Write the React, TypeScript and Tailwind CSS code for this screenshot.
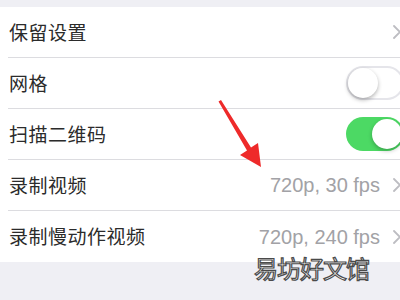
import React from "react";

const font = "font-['Noto_Sans_CJK_SC','Noto_Sans',sans-serif]";

function Chevron() {
  return (
    <svg width="10" height="16" viewBox="0 0 10 16" className="shrink-0">
      <path d="M2 2 L8 8 L2 14" fill="none" stroke="#bdbdc2" strokeWidth="1.8" strokeLinecap="round" strokeLinejoin="round" />
    </svg>
  );
}

function Toggle({ on }: { on: boolean }) {
  return (
    <div
      className={
        on
          ? "relative w-[58px] h-[34px] rounded-full bg-[#4cd964] shrink-0"
          : "relative w-[58px] h-[34px] rounded-full bg-white border-2 border-[#e5e5ea] shrink-0"
      }
    >
      <div
        className={
          on
            ? "absolute top-[2px] right-[2px] w-[30px] h-[30px] rounded-full bg-white shadow-[0_2px_4px_rgba(0,0,0,0.25)]"
            : "absolute top-0 left-0 w-[30px] h-[30px] rounded-full bg-white shadow-[0_2px_4px_rgba(0,0,0,0.3)]"
        }
      />
    </div>
  );
}

function Row({
  label,
  value,
  chevron,
  toggle,
  last,
}: {
  label: string;
  value?: string;
  chevron?: boolean;
  toggle?: "on" | "off";
  last?: boolean;
}) {
  return (
    <div className="pl-[8px] bg-white">
      <div
        className={
          "h-[51px] flex items-center pl-[1px] " +
          (last ? "" : "border-b border-[#dcdce0]")
        }
      >
        <span className="text-[19px] text-[#2b2b2b] flex-1 tracking-[0.5px]">{label}</span>
        {value && (
          <span className="text-[20px] text-[#a2a2a6] mr-[12px] font-['Liberation_Sans',sans-serif]">
            {value}
          </span>
        )}
        {chevron && (
          <div className="w-[20px] flex justify-start">
            <Chevron />
          </div>
        )}
        {toggle && (
          <div className="w-[66px] flex justify-start">
            <Toggle on={toggle === "on"} />
          </div>
        )}
      </div>
    </div>
  );
}

export default function App() {
  return (
    <div className={"w-[400px] h-[300px] overflow-hidden bg-[#efeff4] relative " + font}>
      <div className="h-[7px]" />
      <div className="w-[412px]">
        <Row label="保留设置" chevron />
        <Row label="网格" toggle="off" />
        <Row label="扫描二维码" toggle="on" />
        <Row label="录制视频" value="720p, 30 fps" chevron />
        <Row label="录制慢动作视频" value="720p, 240 fps" chevron last />
      </div>
      <svg className="absolute left-0 top-0" width="400" height="300" viewBox="0 0 400 300">
        <polygon
          points="218.5,101.5 221,100 251,147.5 258,143 261,167 240,155 247,150.5"
          fill="#ee2a2a"
        />
      </svg>
      <div className="absolute left-[254px] top-[253px] text-[24px] leading-[30px] text-white font-['Noto_Sans_CJK_SC',sans-serif] [-webkit-text-stroke:1.2px_#4a4a4a] tracking-[-1px]">
        易坊好文馆
      </div>
    </div>
  );
}
